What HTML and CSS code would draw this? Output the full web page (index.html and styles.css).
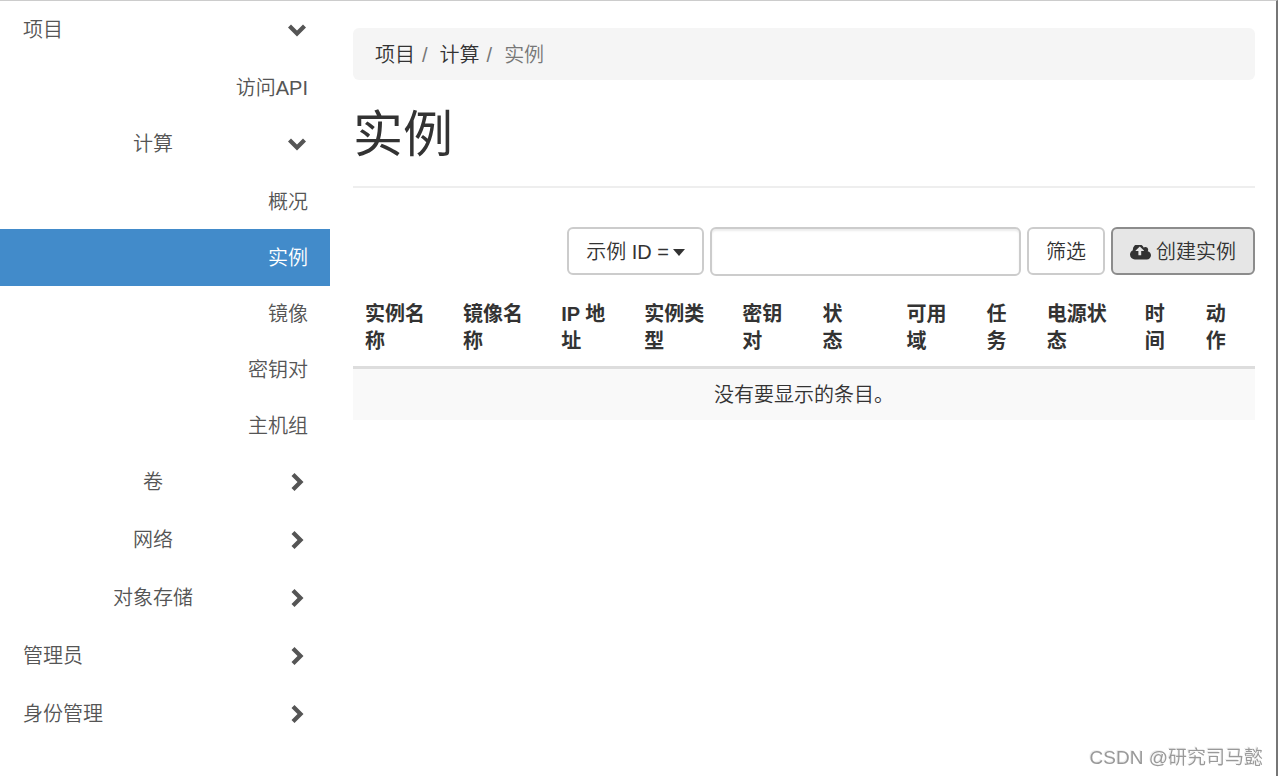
FILE: index.html
```html
<!DOCTYPE html>
<html lang="zh-CN">
<head>
<meta charset="utf-8">
<title>实例</title>
<link rel="stylesheet" href="styles.css">
</head>
<body>
<svg class="sprite" aria-hidden="true">
  <symbol id="chevron" viewBox="0 0 18 18"><path d="M6.5 0 15.5 9 6.5 18 3.5 15 9.500 9 3.5 3Z"/></symbol>
</svg>
<div class="page">
  <nav class="sidebar">
    <button class="group open" type="button"><span>项目</span><svg class="chevron"><use href="#chevron"/></svg></button>
    <a class="leaf" href="#">访问API</a>
    <button class="group sub open" type="button"><span>计算</span><svg class="chevron"><use href="#chevron"/></svg></button>
    <a class="leaf" href="#">概况</a>
    <a class="leaf active" href="#">实例</a>
    <a class="leaf" href="#">镜像</a>
    <a class="leaf" href="#">密钥对</a>
    <a class="leaf" href="#">主机组</a>
    <button class="group sub" type="button"><span>卷</span><svg class="chevron"><use href="#chevron"/></svg></button>
    <button class="group sub" type="button"><span>网络</span><svg class="chevron"><use href="#chevron"/></svg></button>
    <button class="group sub" type="button"><span>对象存储</span><svg class="chevron"><use href="#chevron"/></svg></button>
    <button class="group" type="button"><span>管理员</span><svg class="chevron"><use href="#chevron"/></svg></button>
    <button class="group" type="button"><span>身份管理</span><svg class="chevron"><use href="#chevron"/></svg></button>
  </nav>
  <main class="content">
    <ol class="breadcrumb">
      <li><a href="#">项目</a></li>
      <li><a href="#">计算</a></li>
      <li>实例</li>
    </ol>
    <h1>实例</h1>
    <form class="actions">
      <button class="btn" type="button">示例 ID =<svg class="caret" viewBox="0 0 12 7"><path d="M0 0h12L6 7Z"/></svg></button>
      <input class="filter" type="text" aria-label="筛选">
      <button class="btn" type="button">筛选</button>
      <button class="btn create" type="button"><svg class="cloud" viewBox="0 256 1920 1280"><path d="M1280 736q0-14-9-23l-352-352q-9-9-23-9t-23 9l-351 351q-10 12-10 24 0 14 9 23t23 9h224v352q0 13 9.500 22.500t22.500 9.500h192q13 0 22.500-9.500t9.500-22.500v-352h224q13 0 22.500-9.500t9.500-22.500zm640 416q0 159-112.500 271.500t-271.500 112.500h-1088q-185 0-316.500-131.500t-131.500-316.500q0-130 70-240t188-165q-2-30-2-43 0-212 150-362t362-150q156 0 285.500 87t188.500 231q71-62 166-62 106 0 181 75t75 181q0 76-41 138 130 31 213.500 135.500t83.500 238.500z"/></svg>创建实例</button>
    </form>
    <table class="instances">
      <colgroup>
        <col class="c-name"><col class="c-name"><col class="c-ip"><col class="c-name"><col class="c-key"><col class="c-status"><col class="c-key"><col class="c-task"><col class="c-name"><col class="c-short"><col class="c-short">
      </colgroup>
      <thead>
        <tr><th>实例名称</th><th>镜像名称</th><th>IP 地址</th><th>实例类型</th><th>密钥对</th><th class="status">状态</th><th>可用域</th><th>任务</th><th>电源状态</th><th>时间</th><th>动作</th></tr>
      </thead>
      <tbody>
        <tr><td colspan="11">没有要显示的条目。</td></tr>
      </tbody>
    </table>
  </main>
</div>
<div class="watermark">CSDN @研究司马懿</div>
</body>
</html>
```
FILE: styles.css
```css
* { box-sizing: border-box; }

body {
  margin: 0;
  background: #fff;
  color: #333;
  font: 20px/28px "Liberation Sans", "Noto Sans CJK SC", sans-serif;
  font-weight: 350;
}

a { color: inherit; text-decoration: none; }
button, input { font: inherit; color: inherit; }
.sprite { position: absolute; width: 0; height: 0; }

.page {
  display: flex;
  min-height: 100vh;
  border-top: 1px solid #ccc;
  border-right: 2px solid #767676;
}

.sidebar { flex: 0 0 330px; color: #555; }

.group {
  display: flex;
  align-items: center;
  justify-content: space-between;
  width: 100%;
  height: 58px;
  padding: 0 24px 0 23px;
  border: 0;
  background: none;
  text-align: left;
}

.group.sub { padding-left: 18px; }
.group.sub span { flex: 1; text-align: center; }

.chevron { width: 18px; height: 18px; fill: #555; }
.open .chevron { transform: rotate(90deg); }

.leaf {
  display: flex;
  align-items: center;
  justify-content: flex-end;
  height: 56px;
  padding: 1px 22px 0;
}

.leaf.active {
  height: 57px;
  margin-bottom: -1px;
  background: #428bca;
  color: #fff;
}

.content { flex: 1; min-width: 0; padding: 27px 21px 24px 23px; }

.breadcrumb {
  display: flex;
  margin: 0;
  padding: 13px 22px 11px;
  list-style: none;
  border-radius: 6px;
  background: #f5f5f5;
  color: #777;
}

.breadcrumb a { color: #333; }
.breadcrumb li + li::before { content: "/"; padding: 0 12px 0 7px; }

h1 {
  margin: 27px 0 39px;
  padding-bottom: 23px;
  border-bottom: 2px solid #eee;
  font-size: 50px;
  line-height: 56px;
  font-weight: 400;
}

.actions { display: flex; justify-content: flex-end; gap: 6px; }

.btn {
  display: flex;
  align-items: center;
  gap: 4px;
  height: 48px;
  padding: 2px 17px 0;
  border: 2px solid #ccc;
  border-radius: 6px;
  background: #fff;
  white-space: nowrap;
}

.btn.create { gap: 5px; border-color: #8c8c8c; background: #e6e6e6; }
.caret { width: 12px; height: 7px; fill: #333; }
.cloud { width: 21px; height: 15px; fill: #333; }

.filter {
  width: 311px;
  min-width: 0;
  height: 49px;
  padding: 0 16px;
  border: 2px solid #ccc;
  border-radius: 6px;
  background: #fff;
  box-shadow: inset 0 2px 2px rgba(0, 0, 0, .08);
}

.instances {
  width: 100%;
  margin-top: 12px;
  border-collapse: separate;
  border-spacing: 0;
  table-layout: fixed;
  line-height: 27px;
}

.c-name { width: 98px; }
.c-ip { width: 83px; }
.c-key { width: 80px; }
.c-status { width: 84px; }
.c-task { width: 60px; }
.c-short { width: 61px; }

th {
  padding: 13px 12px 11px;
  border-bottom: 3px solid #ddd;
  font-weight: 700;
  text-align: left;
  vertical-align: bottom;
}

th.status { padding-right: 36px; }
td { padding: 13px 12px 11px; background: #f9f9f9; text-align: center; }

.watermark {
  position: fixed;
  right: 15px;
  bottom: 4px;
  color: #999;
  font-size: 19px;
  text-shadow: -1px -1px 0 #eee;
}
```
